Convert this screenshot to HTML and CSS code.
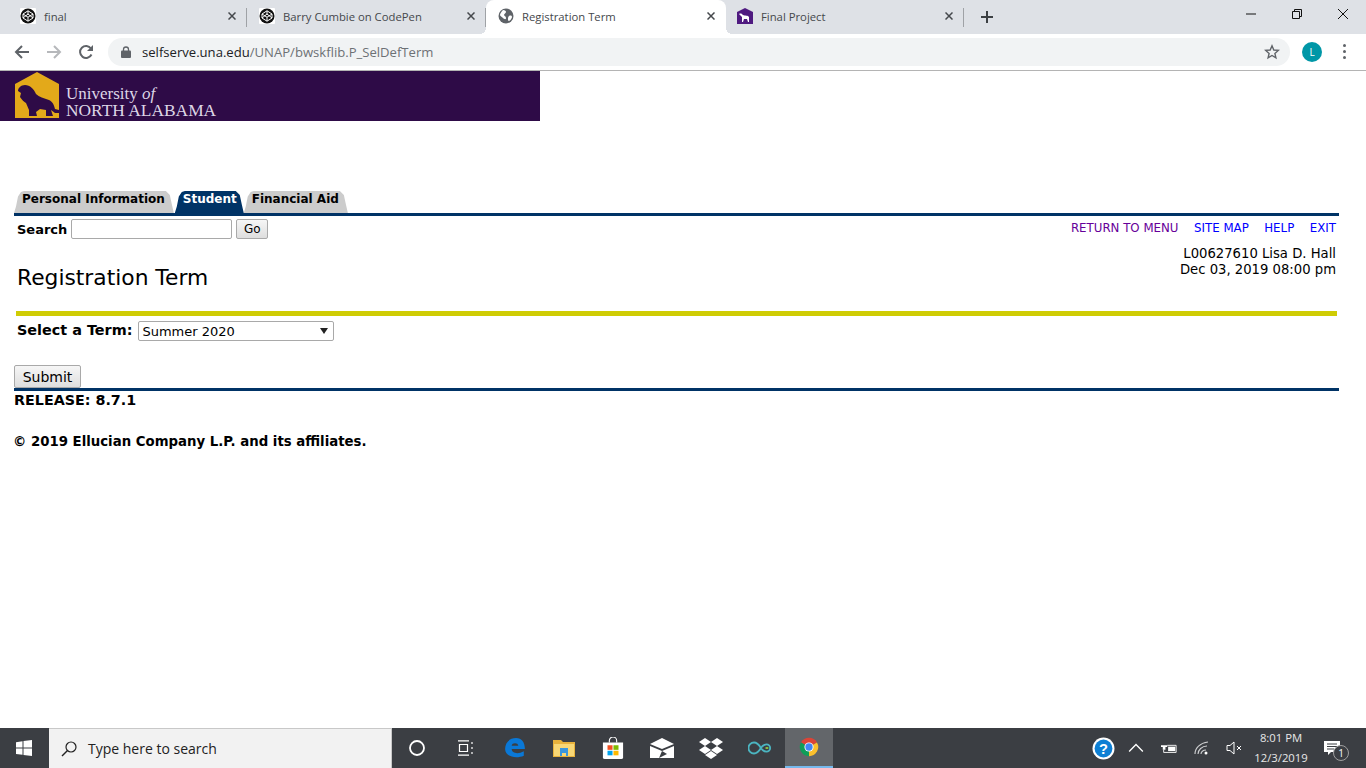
FILE: index.html
```html
<!DOCTYPE html>
<html lang="en">
<head>
    <meta charset="UTF-8">
    <title>Registration Term</title>
    <link rel="stylesheet" href="styles.css">
</head>
<body>
    <svg class="defs">
        <symbol id="codepen" viewBox="0 0 16 16">
            <rect width="16" height="16" rx="1" fill="#fff"/>
            <circle cx="8" cy="8" r="7.5" fill="#111"/>
            <path d="M8 2.800 13 6v4l-5 3.200L3 10V6zM8 2.800V6M3 6l5 3.200L13 6M8 13.200V9.200M3 10l5-4 5 4" fill="none" stroke="#fff" stroke-width="1"/>
        </symbol>
        <symbol id="lion" viewBox="0 0 44 46">
            <path d="M0 46V12L22 0l22 12v34z" fill="#e3a91a"/>
            <path d="M10 13C6 13 3 16 3 19l3 2-1 4c2 3 4 5 6 6l3 7v6h8l-1-4 4-3 6 1v6h7l-2-6 4 3h4v-3l-4-1c-1-4-2-7-6-9-5-2-10-3-13-6-2-5-6-9-11-9z" fill="#2e0b47"/>
        </symbol>
        <symbol id="close" viewBox="0 0 8 8">
            <path d="M.5.500l7 7M7.500.500l-7 7" stroke="#45484c" stroke-width="1.500"/>
        </symbol>
    </svg>

    <div class="browser">
        <div class="tabstrip">
            <div class="tab">
                <svg class="favicon"><use href="#codepen"/></svg>
                <span class="tab-title">final</span>
                <svg class="tab-close"><use href="#close"/></svg>
            </div>
            <div class="tab">
                <svg class="favicon"><use href="#codepen"/></svg>
                <span class="tab-title">Barry Cumbie on CodePen</span>
                <svg class="tab-close"><use href="#close"/></svg>
            </div>
            <div class="tab active">
                <svg class="favicon" viewBox="0 0 16 16">
                    <circle cx="8" cy="8" r="7.5" fill="#5f6368"/>
                    <path d="M5 2c2 0 3 1 3 2S6 6 6 7s2 1 2 3-2 1-3 0-3-2-3-3 1-3 3-5zM11 8c2-1 3 0 3 1s-2 4-3 4-1-1-1-2 0-2 1-3z" fill="#fff"/>
                </svg>
                <span class="tab-title">Registration Term</span>
                <svg class="tab-close"><use href="#close"/></svg>
            </div>
            <div class="tab">
                <svg class="favicon" viewBox="0 0 16 16">
                    <path d="M0 16V4l8-4 8 4v12z" fill="#4f1a80"/>
                    <path d="M2 6c2-1 3 0 4 1 2 1 5 0 6 2v5h-1l-1-3H7l-1 3H5V9z" fill="#fff"/>
                </svg>
                <span class="tab-title">Final Project</span>
                <svg class="tab-close"><use href="#close"/></svg>
            </div>
            <svg class="new-tab" viewBox="0 0 14 14"><path d="M7 1v12M1 7h12" stroke="#3c4043" stroke-width="2"/></svg>
            <div class="win-controls">
                <div class="win-btn"><svg viewBox="0 0 12 12"><path d="M1 6h10" stroke="#111"/></svg></div>
                <div class="win-btn"><svg viewBox="0 0 12 12"><path d="M1.500 3.500h7v7h-7zM3.500 3.500v-2h7v7h-2" fill="none" stroke="#111"/></svg></div>
                <div class="win-btn"><svg viewBox="0 0 12 12"><path d="M1 1l10 10M11 1 1 11" stroke="#111"/></svg></div>
            </div>
        </div>
        <div class="toolbar">
            <svg class="tool-icon" viewBox="0 0 16 16"><path d="M15 8H2M8 2 2 8l6 6" fill="none" stroke="#5f6368" stroke-width="2"/></svg>
            <svg class="tool-icon" viewBox="0 0 16 16"><path d="M1 8h13M8 2l6 6-6 6" fill="none" stroke="#b6b8bb" stroke-width="2"/></svg>
            <svg class="tool-icon" viewBox="0 0 16 16"><path d="M13.500 10.500A6 6 0 1 1 13 4.500" fill="none" stroke="#5f6368" stroke-width="2"/><path d="M15 1v6H9z" fill="#5f6368"/></svg>
            <div class="omnibox">
                <svg class="lock" viewBox="0 0 10 12"><path d="M2.500 5V3.500a2.500 2.500 0 0 1 5 0V5" fill="none" stroke="#5f6368" stroke-width="1.300"/><rect y="4.500" width="10" height="7.500" rx="1" fill="#5f6368"/></svg>
                <span class="url"><span class="url-host">selfserve.una.edu</span>/UNAP/bwskflib.P_SelDefTerm</span>
                <svg class="star" viewBox="0 0 16 16"><path d="M8 1.800 9.800 6l4.500.400-3.400 3 1 4.400L8 11.500l-3.900 2.300 1-4.400-3.400-3L6.200 6z" fill="none" stroke="#5f6368" stroke-width="1.400"/></svg>
            </div>
            <div class="avatar">L</div>
            <div class="menu-dots"><i></i><i></i><i></i></div>
        </div>
    </div>

    <main class="page">
        <div class="banner">
            <svg class="banner-logo"><use href="#lion"/></svg>
            <div class="banner-text">
                <div>University <em>of</em></div>
                <div class="banner-bottom">NORTH ALABAMA</div>
            </div>
        </div>

        <div class="nav-tabs">
            <a class="nav-tab">Personal Information</a>
            <a class="nav-tab current">Student</a>
            <a class="nav-tab">Financial Aid</a>
        </div>
        <div class="rule-navy"></div>

        <div class="search-row">
            <form class="search-form">
                <label>Search</label>
                <input type="text" class="search-input">
                <button type="button" class="go-btn">Go</button>
            </form>
            <div class="links">
                <a class="visited">RETURN TO MENU</a>
                <a>SITE MAP</a>
                <a>HELP</a>
                <a>EXIT</a>
            </div>
        </div>

        <div class="title-row">
            <h1>Registration Term</h1>
            <div class="user-info">L00627610 Lisa D. Hall<br>Dec 03, 2019 08:00 pm</div>
        </div>
        <div class="rule-gold"></div>

        <div class="term-row">
            <label>Select a Term:</label>
            <select class="term-select"><option>Summer 2020</option></select>
        </div>
        <button type="button" class="submit-btn">Submit</button>
        <div class="rule-navy"></div>
        <div class="release">RELEASE: 8.7.1</div>
        <div class="copyright">&copy; 2019 Ellucian Company L.P. and its affiliates.</div>
    </main>

    <footer class="taskbar">
        <div class="start">
            <svg viewBox="0 0 16 16"><path d="M0 2.200 6.500 1.300v6.300H0zM7.500 1.100 16 0v7.600H7.500zM0 8.500h6.500v6.300L0 13.900zM7.500 8.500H16V16l-8.500-1.100z" fill="#fff"/></svg>
        </div>
        <div class="task-search">
            <svg viewBox="0 0 16 16"><circle cx="10" cy="6" r="5" fill="none" stroke="#222" stroke-width="1.200"/><path d="M6.500 9.500 1 15" stroke="#222" stroke-width="1.400"/></svg>
            <span>Type here to search</span>
        </div>
        <div class="task-apps">
            <div class="task-app"><svg class="icon-small" viewBox="0 0 16 16"><circle cx="8" cy="8" r="7" fill="none" stroke="#fff" stroke-width="1.800"/></svg></div>
            <div class="task-app"><svg class="icon-small" viewBox="0 0 16 16"><path d="M0 .8h11M0 15.200h11M1.500 4.500h8v7h-8zM14 2v2M14 7v2M14 12v2" fill="none" stroke="#fff" stroke-width="1.200"/></svg></div>
            <div class="task-app"><svg viewBox="0 0 20 20"><path d="M1 11C1 5 5 1 11 1c5 0 8 4 8 10H7c0 4 6 5 11 2v4c-7 3-17 1-17-6zm6-3h6c0-3-6-3-6 0z" fill="#0a78d7"/></svg></div>
            <div class="task-app"><svg viewBox="0 0 22 18"><path d="M0 1h8l2 2h12v15H0z" fill="#e8b23c"/><path d="M1 5h20v12H1z" fill="#f8d775"/><path d="M7 9h8v8h-2v-3H9v3H7z" fill="#3a96dd"/></svg></div>
            <div class="task-app"><svg viewBox="0 0 24 24"><path d="M8 6V4a4 4 0 0 1 8 0v2" fill="none" stroke="#fff" stroke-width="1.200"/><path d="M1 6h22v16a2 2 0 0 1-2 2H3a2 2 0 0 1-2-2z" fill="#fff"/><path d="M6 9h5.500v5H6z" fill="#f25022"/><path d="M12.500 9H18v5h-5.500z" fill="#7fba00"/><path d="M6 15h5.500v5H6z" fill="#00a4ef"/><path d="M12.500 15H18v5h-5.500z" fill="#ffb900"/></svg></div>
            <div class="task-app"><svg class="icon-large" viewBox="0 0 24 20"><path d="M0 6 12 0l12 6-12 5z" fill="#fff"/><path d="M0 8l12 5 12-5v12H0z" fill="#fff"/><path d="M9 20l3-7 5 3z" fill="#3b3e43"/></svg></div>
            <div class="task-app"><svg class="icon-large" viewBox="0 0 24 22"><path d="M6 1l6 4-6 4-6-4zM18 1l6 4-6 4-6-4zM6 9l6 4-6 4-6-4zM18 9l6 4-6 4-6-4zM12 14l6 4-6 4-6-4z" fill="#fff"/></svg></div>
            <div class="task-app"><svg class="icon-large" viewBox="0 0 26 14"><path d="M14 7C11 2 9 1 6.500 1a6 6 0 0 0 0 12C9 13 11 12 14 7c2-3 4-4 6-4a4 4 0 0 1 0 8c-2 0-4-1-6-4z" fill="none" stroke="#4bb5c1" stroke-width="2"/><path d="M19 7h3" stroke="#8dc63f" stroke-width="2"/></svg></div>
            <div class="task-app running">
                <svg viewBox="0 0 24 24">
                    <path d="M12 12 3.300 7A10 10 0 0 1 20.700 7z" fill="#db4437"/>
                    <path d="M12 12 20.700 7A10 10 0 0 1 12 22z" fill="#fbc02d"/>
                    <path d="M12 12 12 22A10 10 0 0 1 3.300 7z" fill="#0f9d58"/>
                    <circle cx="12" cy="12" r="5" fill="#fff"/>
                    <circle cx="12" cy="12" r="4" fill="#4285f4"/>
                </svg>
            </div>
        </div>
        <div class="tray">
            <div class="tray-item wide"><svg class="help-icon" viewBox="0 0 22 22"><circle cx="11" cy="11" r="10.500" fill="#fff"/><circle cx="11" cy="11" r="8.500" fill="#0d7fd4"/><text x="11" y="16" class="help-mark">?</text></svg></div>
            <div class="tray-item"><svg viewBox="0 0 14 8"><path d="M1 7l6-6 6 6" fill="none" stroke="#fff" stroke-width="1.200"/></svg></div>
            <div class="tray-item wide"><svg viewBox="0 0 18 12"><path d="M2 0v3M5 0v3M0 3h7v2H5v3H2V5H0z" fill="#fff"/><path d="M7 3h10v8H3V8" fill="none" stroke="#fff"/><path d="M8 4.500h8v5H8z" fill="#fff"/></svg></div>
            <div class="tray-item"><svg viewBox="0 0 16 14"><path d="M1 13C1 7 6 2 14 1M4 13c0-4 4-8 9-8M7 13c0-2 2-4 5-4" fill="none" stroke="#cfd0d2" stroke-width="1.100"/><circle cx="12" cy="12" r="1.500" fill="#fff"/></svg></div>
            <div class="tray-item"><svg viewBox="0 0 16 14"><path d="M1 4.500h3L8 1v12L4 9.500H1z" fill="none" stroke="#fff"/><path d="M11 5l4 4M15 5l-4 4" stroke="#fff"/></svg></div>
            <div class="clock">8:01 PM<br>12/3/2019</div>
            <div class="notif">
                <svg viewBox="0 0 16 14"><path d="M0 0h16v11H7l-3 3v-3H0z" fill="#fff"/><path d="M3 3h10M3 5.500h10M3 8h7" stroke="#3b3e43"/></svg>
                <span class="notif-count">1</span>
            </div>
        </div>
    </footer>
</body>
</html>
```

FILE: styles.css
```css
* {
    box-sizing: border-box;
}

body {
    margin: 0;
    height: 768px;
    display: flex;
    flex-direction: column;
    overflow: hidden;
    background: #fff;
    font-family: "DejaVu Sans", Verdana, sans-serif;
    color: #000;
}

.defs {
    display: none;
}

/* browser frame */
.browser {
    font-family: "Open Sans", "Noto Sans", sans-serif;
    flex: none;
}

.tabstrip {
    height: 34px;
    padding-left: 8px;
    display: flex;
    background: #dee1e6;
}

.tab {
    position: relative;
    width: 239px;
    height: 34px;
    padding: 0 0 2px 12px;
    display: flex;
    align-items: center;
    font-size: 11.3px;
    color: #45484c;
}

.tab::after {
    content: "";
    position: absolute;
    right: 0;
    top: 8px;
    height: 19px;
    width: 1px;
    background: #9fa2a6;
}

.tab.active {
    background: #fff;
    border-radius: 8px 8px 0 0;
    width: 240px;
    margin-right: -1px;
    z-index: 1;
}

.tab.active::before,
.tab.active::after {
    content: "";
    position: absolute;
    top: auto;
    bottom: 0;
    width: 6px;
    height: 6px;
}

.tab.active::before {
    left: -6px;
    background: radial-gradient(circle at 0 0, transparent 6px, #fff 6px);
}

.tab.active::after {
    right: -6px;
    background: radial-gradient(circle at 100% 0, transparent 6px, #fff 6px);
}

.favicon {
    width: 16px;
    height: 16px;
    flex: none;
}

.tab-title {
    margin-left: 8px;
    flex: 1;
}

.tab-close {
    width: 8px;
    height: 8px;
    margin-right: 11px;
    flex: none;
}

.new-tab {
    width: 14px;
    height: 14px;
    margin: 10px 0 0 16px;
}

.win-controls {
    margin-left: auto;
    display: flex;
}

.win-btn {
    width: 46px;
    height: 28px;
    display: flex;
    align-items: center;
    justify-content: center;
}

.win-btn svg {
    width: 12px;
    height: 12px;
}

.toolbar {
    height: 37px;
    padding: 4px 0 5px 14px;
    display: flex;
    align-items: center;
    background: #fff;
    border-bottom: 1px solid #b4b4b4;
}

.tool-icon {
    width: 16px;
    height: 16px;
    margin-right: 16px;
    flex: none;
}

.omnibox {
    width: 1182px;
    height: 28px;
    margin-left: -2px;
    padding: 0 10px 0 13px;
    display: flex;
    align-items: center;
    background: #f1f3f4;
    border-radius: 14px;
}

.lock {
    width: 10px;
    height: 12px;
    flex: none;
}

.url {
    margin-left: 11px;
    flex: 1;
    font-size: 13.1px;
    color: #6d7175;
}

.url-host {
    color: #202124;
}

.star {
    width: 16px;
    height: 16px;
}

.avatar {
    width: 20px;
    height: 20px;
    margin-left: 12px;
    border-radius: 50%;
    background: #0097a7;
    color: #fff;
    font-size: 10px;
    line-height: 20px;
    text-align: center;
}

.menu-dots {
    margin-left: 21px;
    display: flex;
    flex-direction: column;
    gap: 3px;
}

.menu-dots i {
    width: 3px;
    height: 3px;
    border-radius: 50%;
    background: #5f6368;
}

/* page */
.page {
    flex: 1;
    min-height: 0;
    font-size: 13px;
}

.banner {
    width: 540px;
    height: 50px;
    padding: 1px 0 3px 15px;
    display: flex;
    background: #2e0b47;
}

.banner-logo {
    width: 44px;
    height: 46px;
    flex: none;
}

.banner-text {
    margin-left: 7px;
    padding-top: 13px;
    font-family: "Liberation Serif", serif;
    font-size: 17px;
    line-height: 17px;
    color: #ddd6e6;
}

.banner-bottom {
    font-size: 17.4px;
}

.nav-tabs {
    margin: 70px 0 0 14px;
    height: 22px;
    display: flex;
}

.nav-tab {
    height: 22px;
    padding: 1px 9px 0 8px;
    margin-right: 1px;
    background: #ccc;
    font-weight: bold;
    font-size: 12px;
    line-height: 15px;
    clip-path: polygon(0 100%, 2px 70%, 4px 25%, 7px 4%, 10px 0, calc(100% - 8px) 0, calc(100% - 4px) 18%, calc(100% - 2px) 60%, 100% 100%);
}

.nav-tab.current {
    padding-right: 7px;
    margin-right: 0;
    background: #003366;
    color: #fff;
}

.rule-navy {
    width: 1325px;
    height: 3px;
    margin-left: 14px;
    background: #003366;
}

.search-row {
    width: 1322px;
    margin-left: 17px;
    height: 29px;
    display: flex;
    justify-content: space-between;
    align-items: flex-start;
}

.search-form {
    margin-top: 3px;
    display: flex;
    align-items: center;
    font-weight: bold;
}

.search-input {
    width: 161px;
    height: 20px;
    margin-left: 4px;
    border: 1px solid #a9a9a9;
    border-radius: 2px;
}

.go-btn {
    width: 32px;
    height: 20px;
    margin-left: 4px;
    padding: 0;
    border: 1px solid #a9a9a9;
    border-radius: 2px;
    background: linear-gradient(#f6f6f6, #dedede);
    font: 12px "DejaVu Sans", Verdana, sans-serif;
}

.links {
    margin: 5px 3px 0 0;
    display: flex;
    gap: 15.5px;
    font-size: 11.8px;
    color: #0000ff;
}

.links .visited {
    color: #660099;
}

.title-row {
    width: 1319px;
    height: 66px;
    margin-left: 17px;
    display: flex;
    justify-content: space-between;
}

.title-row h1 {
    margin: 20px 0 0;
    font-size: 21.8px;
    font-weight: normal;
}

.user-info {
    margin-top: 1px;
    font-size: 13.2px;
    line-height: 16px;
    text-align: right;
}

.rule-gold {
    width: 1321px;
    height: 5px;
    margin-left: 16px;
    background: #cfcc04;
}

.term-row {
    margin: 5px 0 0 17px;
    height: 44px;
    display: flex;
    align-items: flex-start;
    font-weight: bold;
    font-size: 14.4px;
}

.term-row label {
    margin-top: 1px;
}

.term-select {
    width: 196px;
    height: 20px;
    margin-left: 6px;
    padding: 0 0 0 3px;
    appearance: none;
    font: 13px "DejaVu Sans", Verdana, sans-serif;
    background: #fff url("data:image/svg+xml,%3Csvg xmlns='http://www.w3.org/2000/svg' width='8' height='6'%3E%3Cpath d='M0 0h8L4 6z' fill='%23222'/%3E%3C/svg%3E") no-repeat right 5px center;
    border: 1px solid #a9a9a9;
    border-radius: 2px;
}

.submit-btn {
    display: block;
    width: 67px;
    height: 23px;
    margin-left: 14px;
    padding: 0;
    border: 1px solid #a9a9a9;
    border-radius: 2px;
    background: linear-gradient(#f6f6f6, #dedede);
    font: 14px "DejaVu Sans", Verdana, sans-serif;
}

.release {
    margin: 1px 0 0 14px;
    font-weight: bold;
    font-size: 14.3px;
}

.copyright {
    margin: 26px 0 0 13px;
    font-weight: bold;
    font-size: 13.3px;
}

/* windows taskbar */
.taskbar {
    flex: none;
    height: 40px;
    display: flex;
    align-items: stretch;
    background: #3b3e43;
    font-family: "Open Sans", "Noto Sans", sans-serif;
    color: #fff;
}

.start {
    width: 49px;
    display: flex;
    align-items: center;
    padding-left: 16px;
}

.start svg {
    width: 16px;
    height: 16px;
}

.task-search {
    width: 343px;
    padding-left: 12px;
    display: flex;
    align-items: center;
    background: #f2f2f2;
    border: 1px solid #c8c8c8;
    border-width: 1px 1px 0 0;
    color: #222;
    font-size: 14px;
}

.task-search svg {
    width: 16px;
    height: 16px;
    margin-right: 11px;
}

.task-apps {
    margin-left: 1px;
    display: flex;
    gap: 1px;
}

.task-app {
    width: 48px;
    display: flex;
    align-items: center;
    justify-content: center;
}

.task-app svg {
    width: 22px;
    height: 22px;
}

.task-app .icon-small {
    width: 16px;
    height: 16px;
}

.task-app .icon-large {
    width: 24px;
    height: 24px;
}

.task-app.running {
    background: #63666a;
    border-bottom: 2px solid #76b9ed;
}

.tray {
    margin-left: auto;
    padding-right: 14px;
    display: flex;
    align-items: center;
}

.tray-item {
    width: 32px;
    display: flex;
    align-items: center;
    justify-content: center;
}

.tray-item.wide {
    width: 34px;
}

.tray-item svg {
    width: 16px;
    height: 16px;
}

.tray-item .help-icon {
    width: 23px;
    height: 23px;
}

.help-mark {
    font: bold 14px "Liberation Sans", sans-serif;
    fill: #fff;
    text-anchor: middle;
}

.clock {
    width: 62px;
    font-size: 11.3px;
    line-height: 20px;
    text-align: center;
    color: #e8e8e8;
}

.notif {
    position: relative;
    width: 40px;
    height: 40px;
    display: flex;
    align-items: center;
    padding-left: 12px;
}

.notif svg {
    width: 16px;
    height: 14px;
}

.notif-count {
    position: absolute;
    left: 21px;
    top: 17px;
    width: 16px;
    height: 16px;
    border: 1px solid #a0a0a0;
    border-radius: 50%;
    background: #3b3e43;
    font-size: 10px;
    line-height: 14px;
    text-align: center;
}
```
